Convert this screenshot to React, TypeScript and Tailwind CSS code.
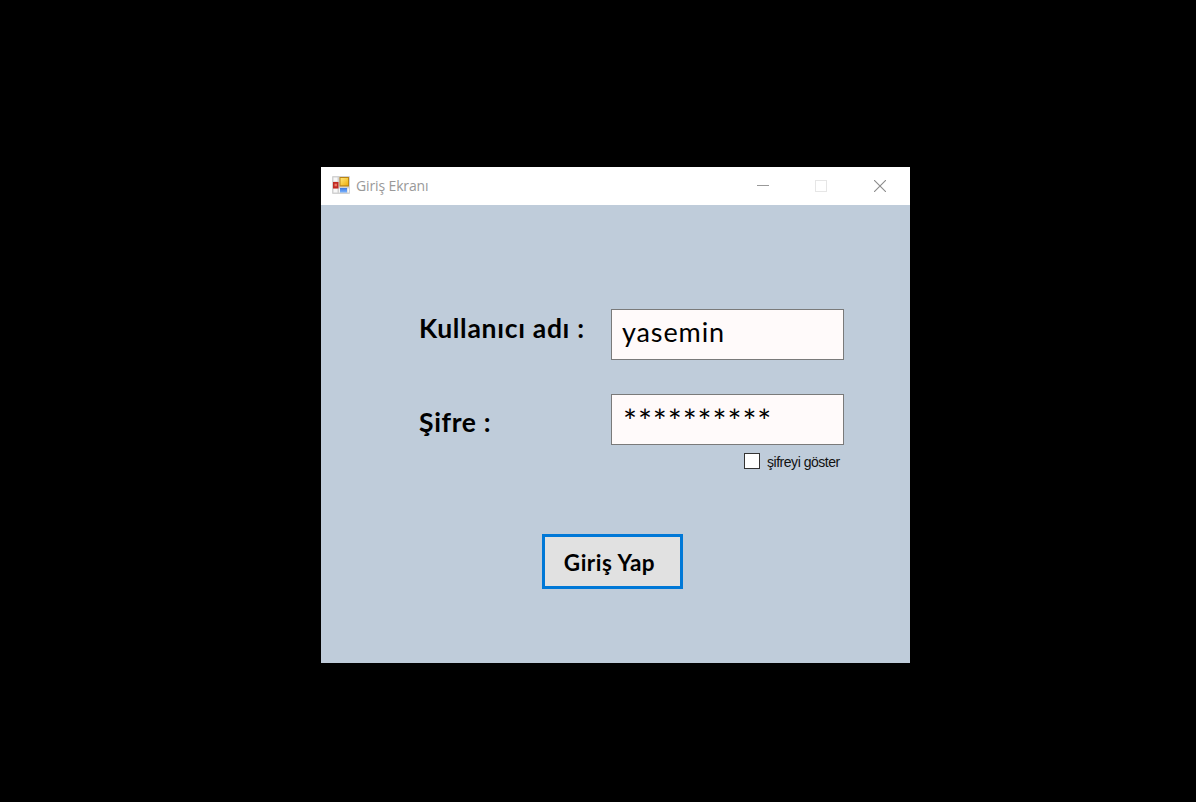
import React from "react";

function FormIcon() {
  return (
    <svg width="18" height="18" viewBox="0 0 18 18" className="mb-[2px] shrink-0">
      <defs>
        <linearGradient id="gold" x1="0" y1="0" x2="1" y2="1">
          <stop offset="0" stopColor="#ffe678" />
          <stop offset="1" stopColor="#eeb010" />
        </linearGradient>
        <linearGradient id="blue" x1="0" y1="0" x2="0" y2="1">
          <stop offset="0" stopColor="#3a78e0" />
          <stop offset="1" stopColor="#7db4ff" />
        </linearGradient>
      </defs>
      <rect width="18" height="18" rx="1" fill="#d2d2d2" />
      <path d="M1.5 1.5h4v4h-4zM1.5 12.5h4v4h-4zM7 12.5h1v4H7zM15.5 12.5h1.5v4h-1.5z" fill="#f8f8f8" />
      <rect x="1" y="6" width="5.5" height="6.5" fill="#c12a22" />
      <rect x="2.5" y="7.7" width="2.4" height="2.6" fill="#e87a6a" />
      <rect x="7.5" y="1" width="9.5" height="9.5" fill="#b98414" />
      <rect x="8.5" y="2" width="7.5" height="7.3" fill="url(#gold)" />
      <rect x="8" y="12" width="7" height="4.5" fill="url(#blue)" />
    </svg>
  );
}

function TitleBar() {
  return (
    <header className="flex h-[38px] items-center bg-white pl-[11px]">
      <FormIcon />
      <span className="ml-[6px] whitespace-nowrap font-['Open_Sans',sans-serif] text-[14px] leading-5 tracking-[-0.13px] text-[#999999]">
        Giriş Ekranı
      </span>
      <div className="ml-auto flex h-full">
        <button aria-label="Minimize" className="flex w-[58px] items-center justify-center">
          <svg width="12" height="12" shapeRendering="crispEdges">
            <path d="M0 5.5h12" stroke="#999999" />
          </svg>
        </button>
        <button aria-label="Maximize" className="flex w-[58px] items-center justify-center">
          <svg width="12" height="12" shapeRendering="crispEdges">
            <rect x="0.5" y="0.5" width="11" height="11" fill="none" stroke="#e6e6e6" />
          </svg>
        </button>
        <button aria-label="Close" className="flex w-[60px] items-center justify-center">
          <svg width="12" height="12">
            <path d="M0 0l12 12M12 0L0 12" stroke="#8c8c8c" strokeWidth="1.1" />
          </svg>
        </button>
      </div>
    </header>
  );
}

export default function App() {
  return (
    <main className="flex h-[802px] w-[1196px] items-start bg-black pl-[321px] pt-[167px] font-['Lato',sans-serif] text-black">
      <section className="h-[496px] w-[589px] bg-[#bfccda]">
        <TitleBar />
        <div className="flex flex-col pt-[104px]">
          <div className="flex h-[51px] pl-[98px]">
            <span className="w-[192px] whitespace-nowrap pt-[4px] text-[26.5px] font-bold leading-[30px] tracking-[0.7px]">
              Kullanıcı adı :
            </span>
            <div className="h-[51px] w-[233px] border border-[#7a7a7a] bg-[#fffafa] pl-[10px] pt-[7px] text-[27px] leading-[30px] tracking-[0.9px]">
              yasemin
            </div>
          </div>
          <div className="mt-[34px] flex h-[51px] pl-[98px]">
            <span className="w-[192px] whitespace-nowrap pt-[13px] text-[26.5px] font-bold leading-[30px] tracking-[0.65px]">
              Şifre :
            </span>
            <div className="h-[51px] w-[233px] border border-[#7a7a7a] bg-[#fffafa] pl-[11px] pt-[10px] text-[33px] leading-[30px] tracking-[0.9px]">
              **********
            </div>
          </div>
          <label className="ml-[423px] mt-[8px] flex h-4 items-center">
            <span className="h-4 w-4 border border-[#333333] bg-white" />
            <span className="ml-[7px] whitespace-nowrap pt-[2px] font-['Liberation_Sans',sans-serif] text-[14px] leading-4 tracking-[-0.47px] text-[#111111]">
              şifreyi göster
            </span>
          </label>
          <button className="ml-[221px] mt-[65px] h-[55px] w-[141px] whitespace-nowrap border-[3px] border-[#0078d7] bg-[#e1e1e1] pr-[6px] pt-[2px] text-[22.5px] font-bold leading-6 tracking-[0.5px]">
            Giriş Yap
          </button>
        </div>
      </section>
    </main>
  );
}
